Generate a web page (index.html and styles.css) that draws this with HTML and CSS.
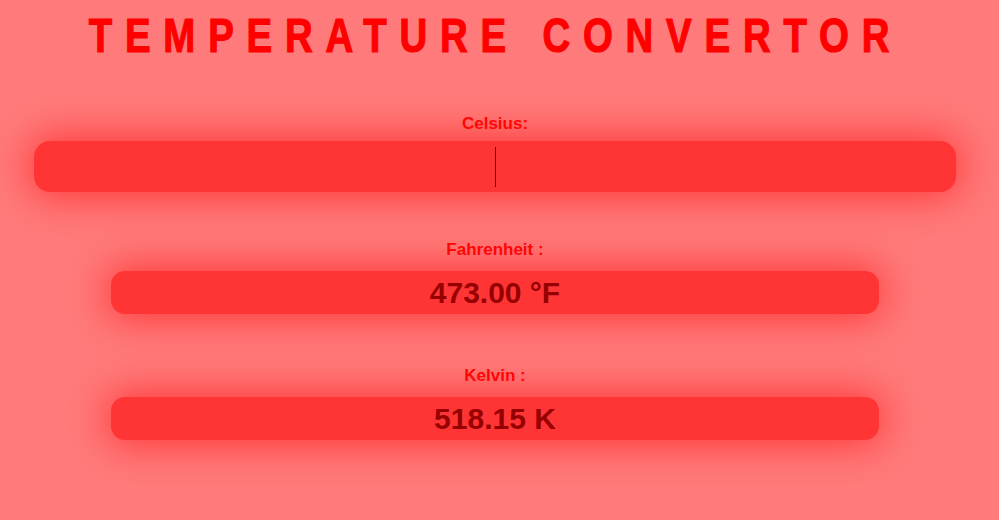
FILE: index.html
```html
<!DOCTYPE html>
<html lang="en">
<head>
<meta charset="utf-8">
<title>Temperature Convertor</title>
<link rel="stylesheet" href="styles.css">
</head>
<body>
  <div class="page">
    <h1 class="title"><span class="title-text">TEMPERATURE CONVERTOR</span></h1>
    <main class="converter">
      <section class="group">
        <label class="label">Celsius:</label>
        <div class="field field-input"><span class="caret"></span></div>
      </section>
      <section class="group">
        <label class="label">Fahrenheit :</label>
        <div class="field field-output">473.00 °F</div>
      </section>
      <section class="group">
        <label class="label">Kelvin :</label>
        <div class="field field-output">518.15 K</div>
      </section>
    </main>
  </div>
</body>
</html>
```

FILE: styles.css
```css
html, body {
  margin: 0;
  padding: 0;
}
body {
  background: #ff7b7b;
  font-family: "Liberation Sans", Arial, sans-serif;
  height: 520px;
  overflow: hidden;
}
.page {
  width: 990px;
}
.title {
  margin: 0;
  padding-top: 9px;
  display: flex;
  justify-content: center;
  font-family: "Liberation Sans", Arial, sans-serif;
  font-weight: 700;
  font-size: 48px;
  line-height: 54px;
  color: #ff0000;
}
.title-text {
  display: inline-block;
  white-space: nowrap;
  letter-spacing: 16px;
  transform: scaleX(0.8);
  -webkit-text-stroke: 1.2px #ff0000;
}
.converter {
  display: flex;
  flex-direction: column;
  align-items: center;
  padding-top: 51px;
}
.group {
  display: flex;
  flex-direction: column;
  align-items: center;
  width: 100%;
}
.label {
  font-weight: 700;
  font-size: 17px;
  line-height: 20px;
  color: #ff0000;
  margin-bottom: 7px;
}
.field {
  background: #ff3535;
  box-shadow: 0 0 40px 4px rgba(255, 35, 35, 0.8);
}
.field-input {
  width: 922px;
  height: 51px;
  border-radius: 16px;
  display: flex;
  align-items: center;
  justify-content: center;
  margin-bottom: 48px;
}
.caret {
  width: 1px;
  height: 40px;
  background: #6b0000;
}
.group + .group .label {
  margin-bottom: 11px;
}
.field-output {
  width: 768px;
  height: 43px;
  border-radius: 14px;
  text-align: center;
  font-family: "Liberation Sans", Arial, sans-serif;
  font-weight: 700;
  font-size: 30px;
  line-height: 43px;
  color: #960000;
  margin-bottom: 52px;
}
```
